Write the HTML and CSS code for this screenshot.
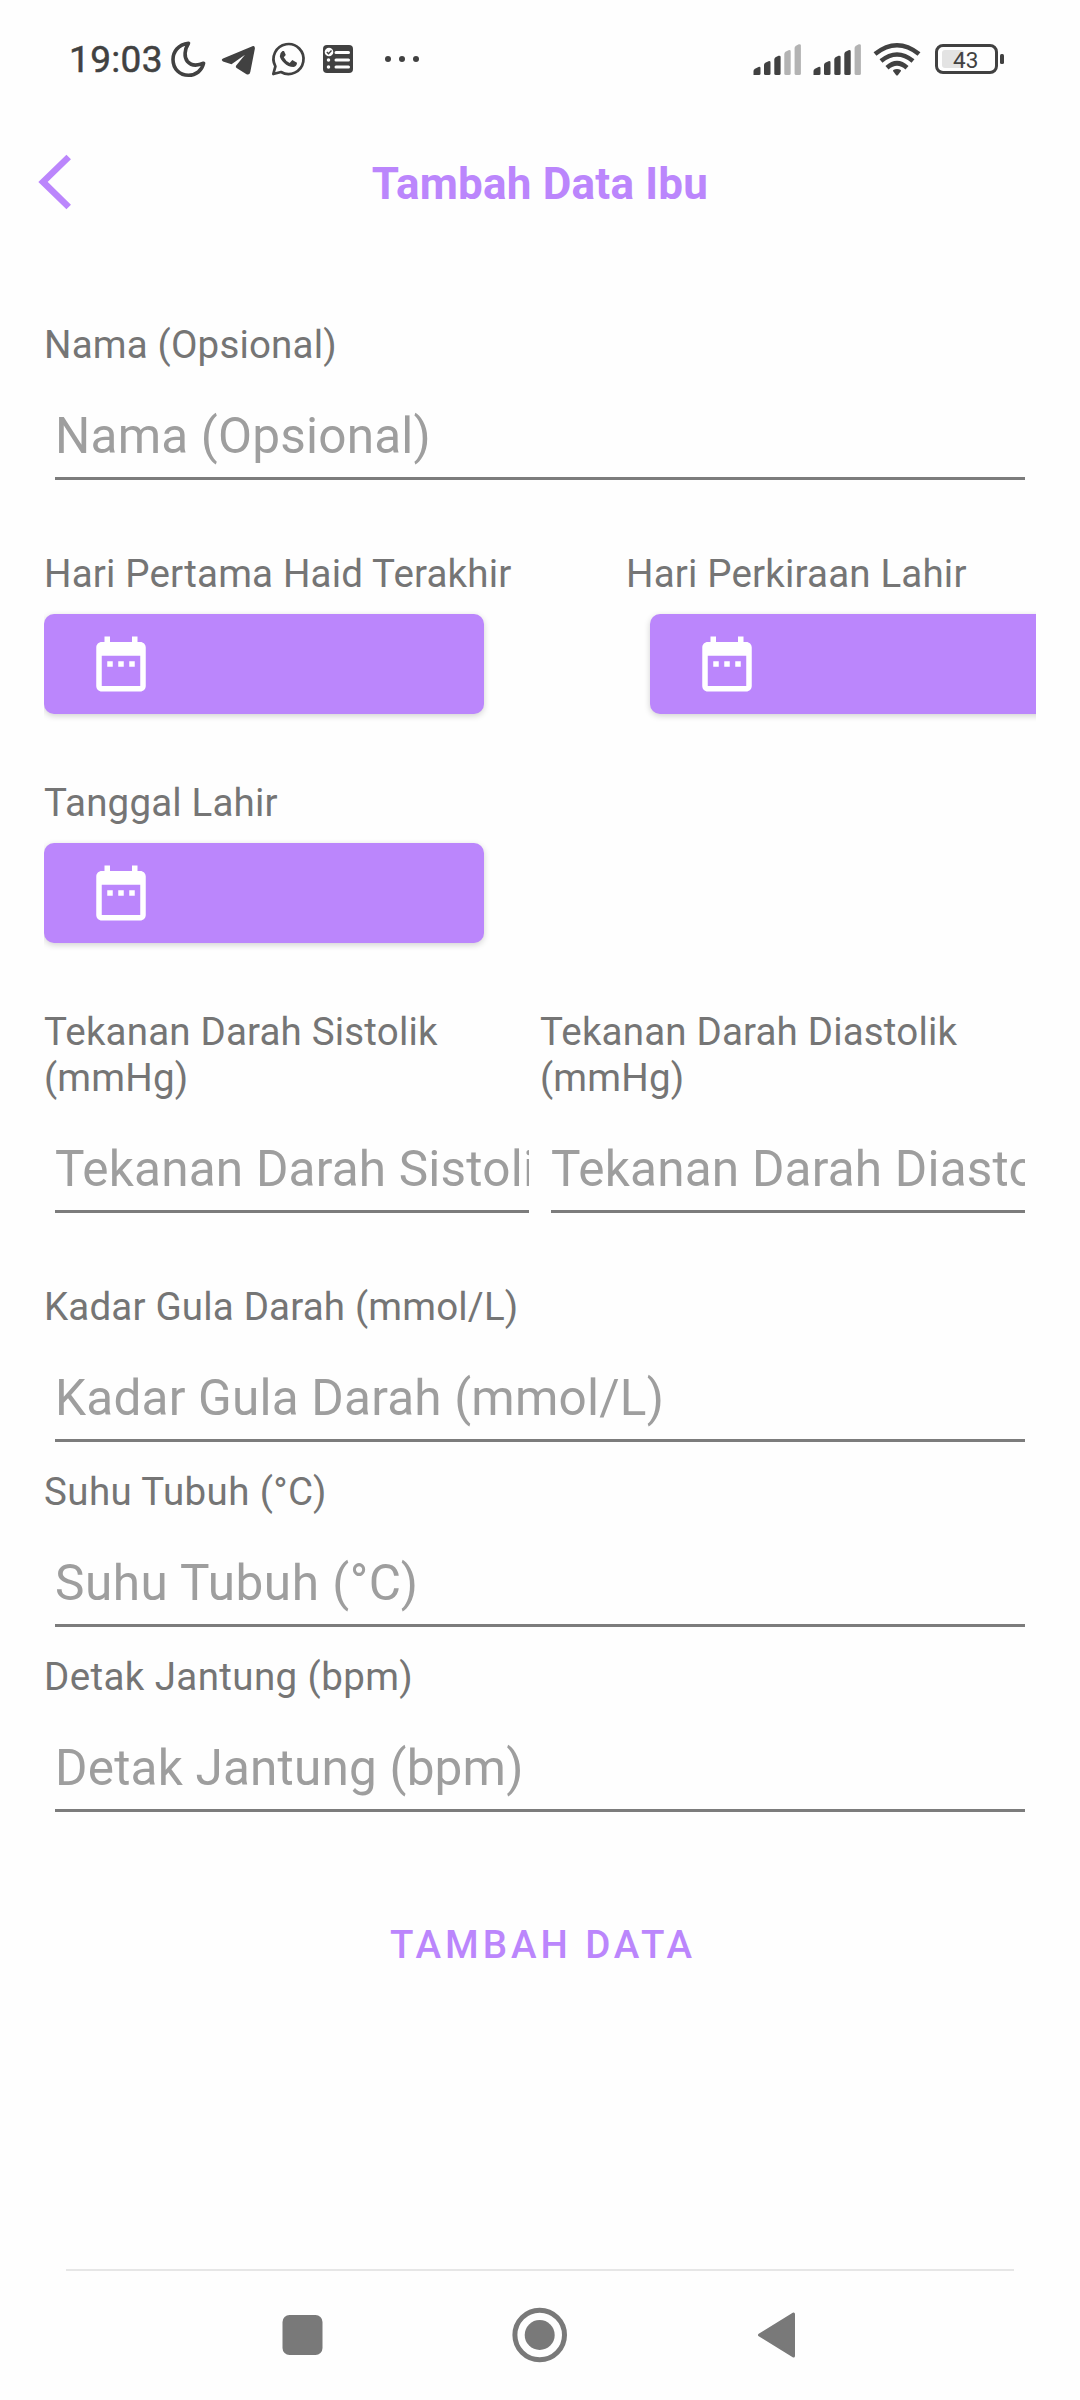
FILE: index.html
```html
<!DOCTYPE html>
<html lang="id">
<head>
<meta charset="utf-8">
<title>Tambah Data Ibu</title>
<link rel="stylesheet" href="styles.css">
</head>
<body>
<svg class="defs" width="0" height="0" aria-hidden="true">
  <symbol id="calendar" viewBox="0 0 24 24"><path d="M9 11H7v2h2v-2zm4 0h-2v2h2v-2zm4 0h-2v2h2v-2zm2-7h-1V2h-2v2H8V2H6v2H5c-1.11 0-1.99.9-1.99 2L3 20c0 1.1.89 2 2 2h14c1.1 0 2-.9 2-2V6c0-1.1-.9-2-2-2zm0 16H5V9h14v11z"/></symbol>
</svg>
<div class="screen">
  <header class="status">
    <span class="clock">19:03</span>
    <svg class="notifications" viewBox="168 36 256 44" width="256" height="44">
      <path d="M188.500 43.200C178 44.500 173 52 173 59.500C173 69 180 75.300 188.500 75.300C196 75.300 202 70.500 203.600 63.200C196 66.500 191 65.500 187.500 61.500C183.800 57 184.500 49.500 188.500 43.200Z" fill="none" stroke="#414141" stroke-width="3.600" stroke-linejoin="round"/>
      <path d="M253 46.100L223 58.600Q220.500 60 223 61.400L231.500 64.200L245 54.800L236 65.800Q235.300 67 236.600 68L246.500 74.200Q249.500 75.500 250.300 72L254.900 48.500Q255 45.400 253 46.100Z" fill="#414141"/>
      <path d="M273.300 74L275.400 66.300A15 15 0 1 1 281 72Z" fill="none" stroke="#414141" stroke-width="2.700" stroke-linejoin="round"/>
      <path d="M282.500 51Q280 52.500 279.800 56.200C280.300 60 286.500 67 293.500 67Q297 66.300 297 62.700L292.300 60.100L289.700 62.900Q285.500 61 283.800 57.300L285.800 55L284 50.900Z" fill="#414141"/>
      <rect x="323" y="45" width="30" height="28" rx="4" fill="#414141"/>
      <g fill="none" stroke="#fefefe" stroke-width="3" stroke-linecap="round">
        <path d="M336 52.500H348.500M336 60H348.500M336 67H348.500"/>
        <path d="M328.500 59.900V60M328.500 66.900V67" stroke-width="3.500"/>
      </g>
      <circle cx="329" cy="52" r="4.300" fill="#fefefe"/>
      <path d="M326.800 52L328.500 53.700L331.500 50.500" fill="none" stroke="#414141" stroke-width="1.300"/>
      <g fill="#414141"><circle cx="388" cy="59" r="3"/><circle cx="402" cy="59" r="3"/><circle cx="416" cy="59" r="3"/></g>
    </svg>
    <svg class="radios" viewBox="750 36 174 44" width="174" height="44">
      <g fill="#414141">
        <path id="b1" d="M753.500 75V71Q753.500 69.500 755 68.700L758.500 66.900Q760.500 66.500 760.500 68V73.500Q760.500 75 759 75H755Q753.500 75 753.500 75Z"/>
        <path id="b2" d="M764 73.500V65Q764 63.500 765.300 62.800L768.500 61.200Q770.500 60.800 770.500 62.500V73.500Q770.500 75 769 75H765.500Q764 75 764 73.500Z"/>
        <path id="b3" d="M774.300 73.500V59.500Q774.300 58 775.500 57.300L778.500 55.800Q780.600 55.300 780.600 57V73.500Q780.600 75 779 75H776Q774.300 75 774.300 73.500Z"/>
        <path fill="#b3b3b3" d="M784.300 73.500V54Q784.300 52.500 785.500 51.700L788.500 50.200Q790.700 49.700 790.700 51.500V73.500Q790.700 75 789 75H786Q784.300 75 784.300 73.500Z"/>
        <path id="b5" fill="#b3b3b3" d="M794.600 73.500V48Q794.600 46.500 796 45.700L798.800 44.300Q800.900 44 800.900 45.500V73.500Q800.900 75 799.300 75H796.200Q794.600 75 794.600 73.500Z"/>
        <use href="#b1" x="60"/><use href="#b2" x="60"/><use href="#b3" x="60"/><use href="#b5" x="60"/>
        <path d="M844.300 73.500V54Q844.300 52.500 845.500 51.700L848.500 50.200Q850.700 49.700 850.700 51.500V73.500Q850.700 75 849 75H846Q844.300 75 844.300 73.500Z"/>
      </g>
      <g fill="none" stroke="#414141" stroke-width="4.600">
        <path d="M875 54Q897 36.500 919 54"/>
        <path d="M881 61Q897 48 913 61"/>
        <path d="M887 67.700Q897 58.800 907 67.700"/>
      </g>
      <path d="M893 71Q892.600 69.500 897 69Q901.400 69.500 901 71L898 75Q897 76 896 75Z" fill="#414141"/>
    </svg>
    <div class="battery">
      <div class="battery-level"></div>
      <span class="battery-text">43</span>
    </div>
    <div class="battery-tip"></div>
  </header>

  <div class="appbar">
    <svg class="back" viewBox="36 152 38 60" width="38" height="60"><path d="M68.700 157L43 181.900L68.700 207" fill="none" stroke="#bb86fc" stroke-width="6.500"/></svg>
    <h1 class="title">Tambah Data Ibu</h1>
  </div>

  <main class="form">
    <section class="field field-spaced">
      <div class="label">Nama (Opsional)</div>
      <div class="input">Nama (Opsional)</div>
    </section>

    <section class="dates">
      <div class="date">
        <div class="label">Hari Pertama Haid Terakhir</div>
        <div class="date-button"><svg class="icon"><use href="#calendar"/></svg></div>
      </div>
      <div class="date date-due">
        <div class="label">Hari Perkiraan Lahir</div>
        <div class="date-button"><svg class="icon"><use href="#calendar"/></svg></div>
      </div>
    </section>

    <section class="dates">
      <div class="date">
        <div class="label">Tanggal Lahir</div>
        <div class="date-button"><svg class="icon"><use href="#calendar"/></svg></div>
      </div>
    </section>

    <section class="pair field-spaced">
      <div class="field">
        <div class="label">Tekanan Darah Sistolik (mmHg)</div>
        <div class="input">Tekanan Darah Sistolik (mmHg)</div>
      </div>
      <div class="field">
        <div class="label">Tekanan Darah Diastolik (mmHg)</div>
        <div class="input">Tekanan Darah Diastolik (mmHg)</div>
      </div>
    </section>

    <section class="field">
      <div class="label">Kadar Gula Darah (mmol/L)</div>
      <div class="input">Kadar Gula Darah (mmol/L)</div>
    </section>
    <section class="field">
      <div class="label label-wide">Suhu Tubuh (°C)</div>
      <div class="input input-wide">Suhu Tubuh (°C)</div>
    </section>
    <section class="field">
      <div class="label label-wide">Detak Jantung (bpm)</div>
      <div class="input">Detak Jantung (bpm)</div>
    </section>
    <div class="submit">TAMBAH DATA</div>
  </main>

  <nav class="navbar">
    <svg viewBox="276 2305 52 60" width="52" height="60"><rect x="282.500" y="2315" width="40" height="40" rx="7" fill="#797979"/></svg>
    <svg viewBox="510 2305 60 60" width="60" height="60"><circle cx="539.700" cy="2335" r="24.800" fill="none" stroke="#797979" stroke-width="5"/><circle cx="539.700" cy="2335" r="15" fill="#797979"/></svg>
    <svg viewBox="752 2305 52 60" width="52" height="60"><path d="M759.500 2335L793.500 2314V2356Z" fill="#797979" stroke="#797979" stroke-width="3" stroke-linejoin="round"/></svg>
  </nav>
</div>
</body>
</html>
```
FILE: styles.css
```css
body {
  margin: 0;
  background: #fefefe;
  font-family: Roboto, "Liberation Sans", sans-serif;
}

.defs {
  display: block;
}

.screen {
  display: flex;
  flex-direction: column;
  width: 1080px;
  height: 2400px;
  overflow: hidden;
}

.status {
  display: flex;
  align-items: flex-start;
  box-sizing: border-box;
  height: 120px;
  padding: 36px 76px 0 69px;
  color: #414141;
}

.clock {
  width: 99px;
  margin-top: 1px;
  font-size: 37px;
  line-height: 46px;
  letter-spacing: 0.35px;
  white-space: nowrap;
  -webkit-text-stroke: 0.5px #414141;
}

.notifications,
.radios {
  display: block;
}

.radios {
  margin-left: auto;
}

.battery {
  display: flex;
  align-items: center;
  box-sizing: border-box;
  width: 63px;
  height: 30px;
  margin: 8px 2px 0 11px;
  padding-left: 4px;
  border: 3px solid #414141;
  border-radius: 8px;
}

.battery-level {
  width: 22px;
  height: 18px;
  border-radius: 3px;
  background: #e3e3e3;
}

.battery-text {
  margin: 2px 0 0 -11px;
  font-size: 22.5px;
  line-height: 24px;
}

.battery-tip {
  width: 4px;
  height: 10px;
  margin-top: 18px;
  border-radius: 1.5px;
  background: #414141;
}

.appbar {
  display: grid;
  grid-template-columns: 38px 1fr 38px;
  align-items: center;
  height: 124px;
  padding: 0 36px;
}

.back {
  display: block;
}

.title {
  margin: 3px 0 0;
  color: #bb86fc;
  font-size: 44px;
  line-height: 52px;
  font-weight: 700;
  letter-spacing: 0.2px;
  text-align: center;
}

.form {
  box-sizing: border-box;
  flex: 1;
  width: 992px;
  margin-left: 44px;
  padding-top: 78px;
  overflow: hidden;
}

.field {
  min-width: 0;
  padding-bottom: 27px;
}

.field-spaced {
  margin-bottom: 44px;
}

.label {
  color: #757575;
  font-size: 38.5px;
  line-height: 46px;
  letter-spacing: 0.18px;
}

.label-wide {
  letter-spacing: 0.4px;
}

.input {
  height: 70px;
  margin: 39px 11px 0;
  border-bottom: 3px solid #7c7c7c;
  color: #9e9e9e;
  font-size: 49.5px;
  line-height: 58px;
  letter-spacing: 0.2px;
  white-space: nowrap;
  overflow: hidden;
}

.input-wide {
  letter-spacing: 0.5px;
}

.dates {
  display: flex;
  gap: 142px;
  padding-bottom: 66px;
}

.date {
  flex: none;
  width: 440px;
}

.date .label {
  white-space: nowrap;
}

.date-due .date-button {
  margin-left: 24px;
}

.date-button {
  display: flex;
  align-items: center;
  width: 396px;
  height: 100px;
  margin-top: 17px;
  padding-left: 44px;
  border-radius: 10px;
  background: #bb86fc;
  box-shadow: 0 2px 6px rgba(0, 0, 0, 0.18);
}

.icon {
  width: 66px;
  height: 66px;
  fill: #fff;
}

.pair {
  display: grid;
  grid-template-columns: 1fr 1fr;
}

.submit {
  margin-top: 83px;
  padding-left: 6px;
  color: #bb86fc;
  font-size: 38.5px;
  line-height: 46px;
  font-weight: 500;
  letter-spacing: 3.95px;
  text-align: center;
}

.navbar {
  display: flex;
  justify-content: space-between;
  box-sizing: border-box;
  height: 131px;
  margin: 0 66px;
  padding: 34px 210px 0;
  border-top: 2px solid #e6e6e6;
}
```
